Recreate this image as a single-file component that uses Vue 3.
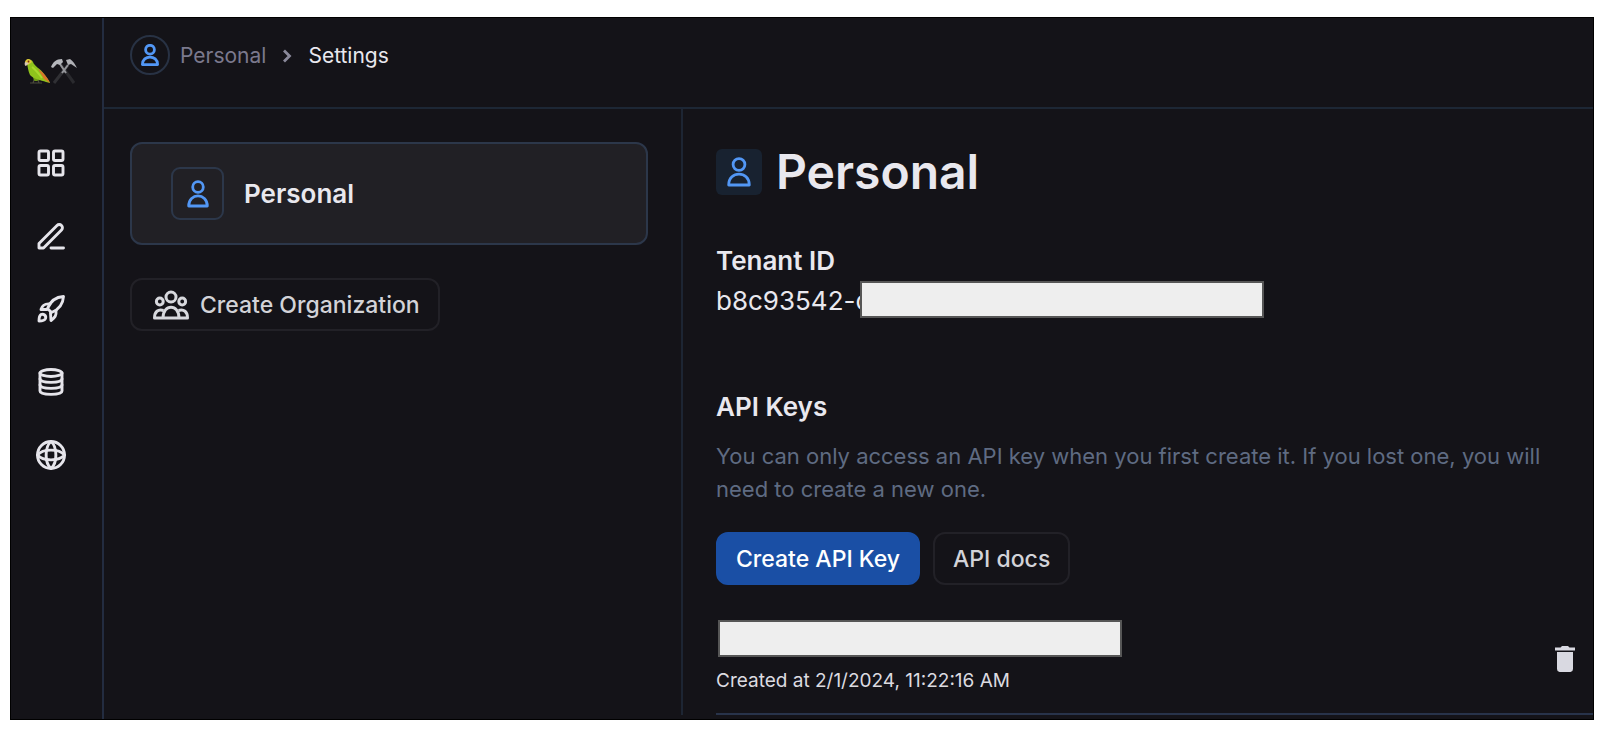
<script setup>
const nav = [
  { name: 'Projects', icon: 'grid' },
  { name: 'Prompts', icon: 'edit' },
  { name: 'Deployments', icon: 'rocket' },
  { name: 'Datasets', icon: 'database' },
  { name: 'Hub', icon: 'globe' },
]

const tenantId = 'b8c93542-c'

const keys = [
  { id: 1, created: '2/1/2024, 11:22:16 AM' },
]
</script>

<template>
  <div class="page">
    <div class="app">
      <aside class="sidebar">
        <a class="logo" href="#" aria-label="Home">
          <svg width="54" height="28" viewBox="0 0 54 28">
            <path d="M8 15 L10 23 L15 23 L18 16 Z" fill="#6d9a12" />
            <path d="M1 6 C1 0 7 0 9 4 C10 8 17 11 20 16 C23 20 25 22 26 25 L22 24 C17 22 9 21 6 17 C4 13 4 9 3 6 Z" fill="#8fc31c" />
            <path d="M14 11 C20 15 23 19 26 25 L20 21 Z" fill="#d9752a" />
            <path d="M8 9 C12 12 15 16 18 20" stroke="#a9d92c" stroke-width="2" fill="none" />
            <path d="M1 4 C2 0 6 0 8 4 L4 7 Z" fill="#e0c63a" />
            <path d="M1 4 C0 6 1 8 2 8 L5 5 Z" fill="#d8c6b4" />
            <circle cx="4.500" cy="3.500" r="0.900" fill="#7b2616" />
            <path d="M6 25 H18 M10 22 L9 25 M14 22 L15 25" stroke="#4b4b3c" stroke-width="1.200" fill="none" />
            <path d="M30 25 L44 7" stroke="#303034" stroke-width="3" />
            <path d="M50 25 L37 7" stroke="#2a2a2e" stroke-width="3" />
            <path d="M38 15 L44 7 M42 15 L36 6" stroke="#94959a" stroke-width="2" />
            <path d="M27 9 C29 4 32 1 38 1 L39 4 L36 7 L33 6 L29 10 Z" fill="#b5b7bc" />
            <path d="M42 2 L46 1 C49 3 51 6 53 10 L47 6 L44 7 Z" fill="#b0b1b6" />
          </svg>
        </a>

        <nav class="nav">
          <a v-for="item in nav" :key="item.name" class="nav-link" href="#" :aria-label="item.name">
            <svg v-if="item.icon === 'grid'" viewBox="0 0 28 28">
              <rect x="2" y="2" width="9.500" height="9.500" rx="1.500" />
              <rect x="16.500" y="2" width="9.500" height="9.500" rx="1.500" />
              <rect x="2" y="16.500" width="9.500" height="9.500" rx="1.500" />
              <rect x="16.500" y="16.500" width="9.500" height="9.500" rx="1.500" />
            </svg>
            <svg v-else-if="item.icon === 'edit'" viewBox="0 0 28 28">
              <path d="M2 26 V21.500 L20 3.500 A3 3 0 0 1 24.500 8 L6.500 26 Z" />
              <path d="M14 26 H26.500" />
            </svg>
            <svg v-else-if="item.icon === 'rocket'" viewBox="0 0 28 28">
              <path d="M26.500 1.500 C18 2 13.500 6 10.500 13.500 L14.500 17.500 C22 14.500 26 10 26.500 1.500 Z" />
              <path d="M13 9 C8 8.500 5.500 9.500 4 14.500 L10 14.500" />
              <path d="M19 15.500 C19.500 20.500 18 22.500 14 25.500 L13.500 18" />
              <path d="M2 26 C2 22.500 2.500 20.500 4 19.500 C6.500 18.500 9.500 20.500 8.500 23.500 C7.500 26 5 26 2 26 Z" />
            </svg>
            <svg v-else-if="item.icon === 'database'" viewBox="0 0 28 28">
              <ellipse cx="14" cy="5" rx="11" ry="3.500" />
              <path d="M3 5 V23 C3 27.500 25 27.500 25 23 V5" />
              <path d="M3 11 C3 15.500 25 15.500 25 11" />
              <path d="M3 17 C3 21.500 25 21.500 25 17" />
            </svg>
            <svg v-else class="globe" viewBox="0 0 30 30">
              <circle cx="15" cy="15" r="13.500" />
              <path d="M15 1.500 C8.500 7 8.500 23 15 28.500 C21.500 23 21.500 7 15 1.500 Z" />
              <path d="M1.500 15 C7 8.500 23 8.500 28.500 15 C23 21.500 7 21.500 1.500 15 Z" />
            </svg>
          </a>
        </nav>
      </aside>

      <div class="main">
        <header class="topbar">
          <span class="avatar">
            <svg class="person" width="18" height="22" viewBox="0 0 18 22">
              <circle cx="9" cy="5.700" r="4.400" />
              <path d="M1.400 20.600 C1.400 10.500 16.600 10.500 16.600 20.600 Z" />
            </svg>
          </span>
          <a class="crumb" href="#">Personal</a>
          <svg class="chevron" width="10" height="14" viewBox="0 0 10 14">
            <path d="M2 1.500 L7.500 7 L2 12.500" />
          </svg>
          <span class="crumb-current">Settings</span>
        </header>

        <div class="content">
          <section class="orgs">
            <button class="org-card" type="button">
              <span class="org-icon">
                <svg class="person" width="22" height="28" viewBox="0 0 22 28">
                  <circle cx="11" cy="7" r="5.300" />
                  <path d="M1.700 26 C1.700 12.500 20.300 12.500 20.300 26 Z" />
                </svg>
              </span>
              Personal
            </button>

            <button class="btn btn-org" type="button">
              <svg class="people" width="36" height="30" viewBox="0 0 36 30">
                <circle cx="18" cy="7" r="5" />
                <circle cx="6.800" cy="11.500" r="3.400" />
                <circle cx="29.200" cy="11.500" r="3.400" />
                <path d="M10 28 C10 13.500 26 13.500 26 28" />
                <path d="M10.500 20.500 C5 19 1.500 21.500 1.500 28 H34.500 C34.500 21.500 31 19 25.500 20.500" />
              </svg>
              Create Organization
            </button>
          </section>

          <section class="settings">
            <div class="title">
              <span class="title-icon">
                <svg class="person" width="24" height="30" viewBox="0 0 24 30">
                  <circle cx="12" cy="7.500" r="5.900" />
                  <path d="M1.700 28 C1.700 13.500 22.300 13.500 22.300 28 Z" />
                </svg>
              </span>
              <h1>Personal</h1>
            </div>

            <h2>Tenant ID</h2>
            <div class="tenant">
              {{ tenantId }}
              <span class="mask mask-tenant"></span>
            </div>

            <h2>API Keys</h2>
            <p class="hint">
              You can only access an API key when you first create it. If you lost one, you will
              need to create a new one.
            </p>

            <div class="actions">
              <button class="btn btn-primary" type="button">Create API Key</button>
              <button class="btn" type="button">API docs</button>
            </div>

            <ul class="keys">
              <li v-for="item in keys" :key="item.id" class="key">
                <div>
                  <div class="mask"></div>
                  <div class="created">Created at {{ item.created }}</div>
                </div>
                <button class="delete" type="button" aria-label="Delete key">
                  <svg width="20" height="26" viewBox="0 0 20 26">
                    <path d="M0 1.500 H5.500 L7 0 H13 L14.500 1.500 H20 V4.500 H0 Z M2 6 H18 V23 A3 3 0 0 1 15.500 26 H4.500 A3 3 0 0 1 2 23 Z" />
                  </svg>
                </button>
              </li>
            </ul>
          </section>
        </div>
      </div>
    </div>
  </div>
</template>

<style>
body {
  margin: 0;
  background: #ffffff;
}
</style>

<style scoped>
* {
  box-sizing: border-box;
}

.page {
  min-height: 100vh;
  padding: 17px 6px 20px 10px;
  display: flex;

  font-family: 'Inter', 'Liberation Sans', sans-serif;
  font-size: 22px;
  color: #e9e8ee;
}

.app {
  flex: 1;
  display: flex;

  background: #141318;
  border: 1px solid #000000;
}

.sidebar {
  width: 93px;
  padding: 40px 12px 40px 0;
  flex-shrink: 0;

  display: flex;
  flex-direction: column;
  align-items: center;

  border-right: 2px solid #232c40;
}

.logo {
  height: 28px;
}

.nav {
  margin-top: 63px;

  display: flex;
  flex-direction: column;
  gap: 45px;
}

.nav-link {
  width: 28px;
  height: 28px;

  display: flex;
  align-items: center;
  justify-content: center;
}

.nav-link svg {
  width: 28px;
  height: 28px;
  flex-shrink: 0;

  fill: none;
  stroke: #e6e5eb;
  stroke-width: 2.9;
  stroke-linecap: round;
  stroke-linejoin: round;
}

.nav-link .globe {
  width: 30px;
  height: 30px;
}

.main {
  flex: 1;
  min-width: 0;

  display: flex;
  flex-direction: column;
}

.topbar {
  height: 91px;
  padding: 17px 26px;

  display: flex;
  align-items: flex-start;

  font-size: 21px;
  line-height: 42px;
  border-bottom: 2px solid #1d2735;
}

.avatar {
  width: 40px;
  height: 40px;
  margin-right: 10px;

  display: flex;
  align-items: center;
  justify-content: center;

  border: 2px solid #283244;
  border-radius: 50%;
}

.person {
  fill: none;
  stroke: #5297f5;
  stroke-width: 2.8;
  stroke-linejoin: round;
}

.crumb {
  color: #7b798d;
  text-decoration: none;
}

.chevron {
  margin: 14px 16px;

  fill: none;
  stroke: #8a899a;
  stroke-width: 2.8;
}

.content {
  flex: 1;
  display: flex;
  padding-bottom: 4px;
}

.orgs {
  width: 39%;
  max-width: 579px;
  padding: 33px 33px 33px 26px;
  flex-shrink: 0;

  border-right: 2px solid #1d2533;
}

.org-card {
  width: 100%;
  height: 103px;
  margin-bottom: 33px;
  padding: 0 39px;

  display: flex;
  align-items: center;
  gap: 20px;

  background: #212025;
  border: 2px solid #2c374a;
  border-radius: 12px;

  font-family: inherit;
  font-weight: 600;
  font-size: 26px;
  color: #e9e8ee;
}

.org-icon {
  width: 53px;
  height: 53px;

  display: flex;
  align-items: center;
  justify-content: center;

  border: 2px solid #2c374a;
  border-radius: 9px;
}

.btn {
  height: 53px;
  padding: 0 18px;

  display: flex;
  align-items: center;

  background: transparent;
  border: 2px solid #222127;
  border-radius: 12px;

  font-family: inherit;
  font-weight: 500;
  font-size: 23px;
  color: #d3d3d8;
}

.btn-org {
  padding-left: 21px;
  gap: 11px;
}

.people {
  fill: none;
  stroke: #d7d8dd;
  stroke-width: 3;
  stroke-linejoin: round;
}

.btn-primary {
  background: #1a4fa5;
  border-color: #1a4fa5;
  color: #ffffff;
}

.settings {
  flex: 1;
  min-width: 0;
  padding: 33px 0 0 33px;
}

.title {
  height: 60px;
  margin-bottom: 41px;

  display: flex;
  align-items: center;
  gap: 14px;
}

.title-icon {
  width: 46px;
  height: 46px;

  display: flex;
  align-items: center;
  justify-content: center;

  background: #182230;
  border-radius: 6px;
}

h1 {
  margin: 0;

  font-weight: 600;
  font-size: 48px;
  line-height: 60px;
}

h2 {
  margin: 0;

  font-weight: 600;
  font-size: 26px;
  line-height: 36px;
}

.tenant {
  position: relative;
  height: 44px;
  margin-bottom: 66px;

  font-size: 26px;
  line-height: 44px;
}

.mask {
  width: 404px;
  height: 37px;
  margin-left: 2px;

  background: #eeeeee;
  border: 2px solid #565656;
}

.mask-tenant {
  position: absolute;
  top: 2px;
  left: 142px;
}

.hint {
  margin: 15px 40px 26px 0;

  line-height: 33px;
  color: #5f6b82;
}

.actions {
  display: flex;
  gap: 13px;
}

.keys {
  margin: 35px 0 0;
  padding: 0;
  list-style: none;
}

.key {
  height: 95px;
  padding-right: 18px;

  display: flex;
  align-items: flex-start;
  justify-content: space-between;

  border-bottom: 2px solid #28334a;
}

.created {
  margin-top: 10px;

  font-size: 19px;
  line-height: 28px;
  color: #dcdbe0;
}

.delete {
  margin-top: 26px;
  padding: 0;

  background: none;
  border: 0;
}

.delete svg {
  display: block;
  fill: #d9d9e1;
}
</style>
